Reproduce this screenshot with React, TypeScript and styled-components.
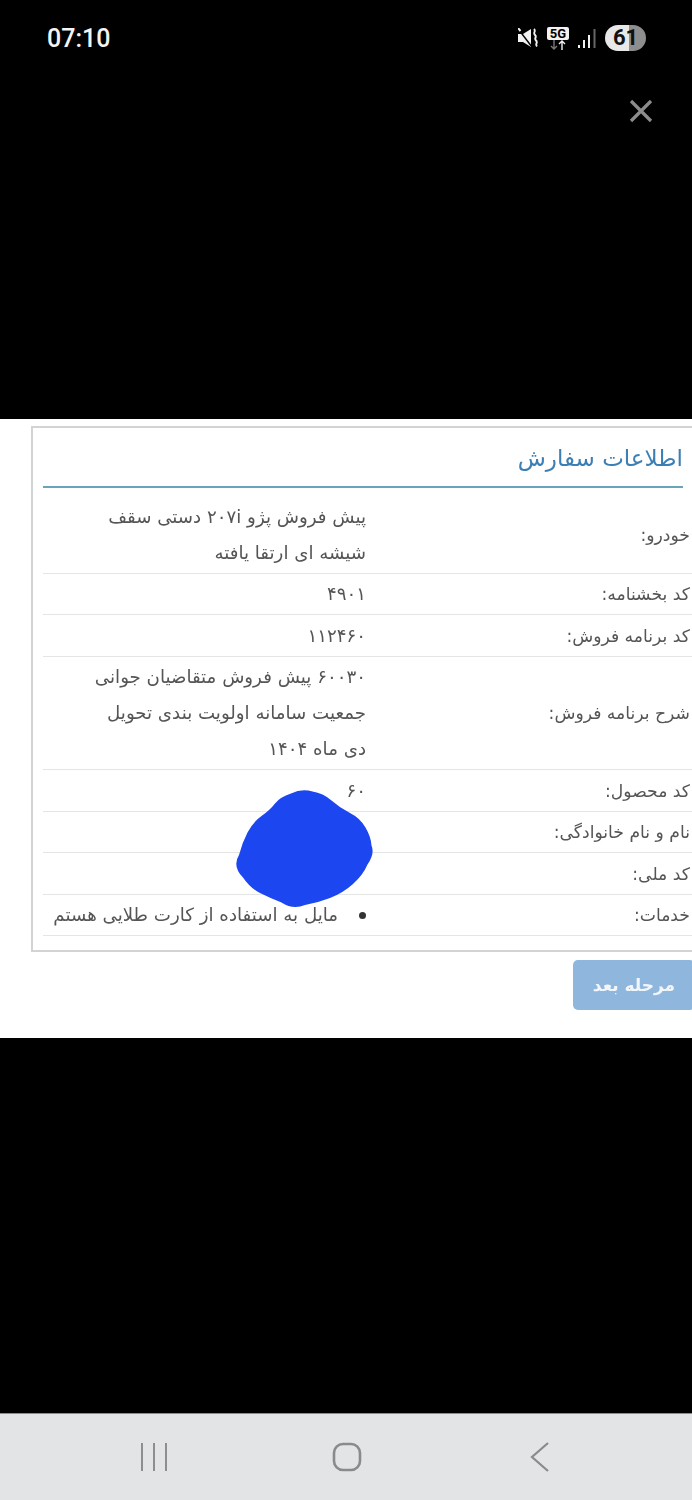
import styled, { createGlobalStyle } from 'styled-components';

const GlobalStyle = createGlobalStyle`
  html, body {
    margin: 0;
    padding: 0;
    background: #000;
  }
  * {
    box-sizing: border-box;
  }
`;

const Screen = styled.div`
  width: 692px;
  height: 1500px;
  position: relative;
  display: flex;
  flex-direction: column;
  overflow: hidden;
  background: #000;
  font-family: 'DejaVu Sans', sans-serif;
`;
const TopArea = styled.div`
  height: 419px;
  flex: none;
  display: flex;
  flex-direction: column;
  padding: 24px 46px 0 47px;
`;
const StatusBar = styled.div`
  height: 28px;
  display: flex;
  align-items: center;
  justify-content: space-between;
`;
const Time = styled.div`
  font-family: Roboto, sans-serif;
  font-weight: 500;
  font-size: 25px;
  color: #f4f4f4;
`;
const StatusIcons = styled.div`
  display: flex;
  align-items: center;
  gap: 9px;
`;
const NetBadge = styled.div`
  width: 22px;
  display: flex;
  flex-direction: column;
  align-items: center;
`;
const NetLabel = styled.div`
  width: 22px;
  height: 13px;
  border-radius: 2px;
  background: #f2f2f2;
  color: #000;
  font-family: Roboto, sans-serif;
  font-weight: 700;
  font-size: 13px;
  line-height: 13px;
  text-align: center;
`;
const Battery = styled.div`
  width: 41px;
  height: 26px;
  border-radius: 13px;
  background: linear-gradient(90deg, #e8e8e8 0 59%, #8e8e8e 59% 100%);
  color: #111;
  font-family: Roboto, sans-serif;
  font-weight: 700;
  font-size: 22px;
  line-height: 26px;
  text-align: center;
`;
const CloseButton = styled.div`
  align-self: flex-end;
  margin: 47px -7px 0 0;
  width: 24px;
  height: 24px;
`;

const Panel = styled.div`
  height: 619px;
  flex: none;
  background: #fff;
  padding: 7px 0 0 31px;
  overflow: hidden;
  filter: blur(0.45px);
`;
const Card = styled.div`
  width: 668px;
  height: 526px;
  border: 2px solid #d2d4d4;
  padding: 0 0 0 10px;
  direction: rtl;
`;
const TitleBar = styled.div`
  height: 60px;
  margin-right: 14px;
  border-bottom: 2px solid #6ba3bd;
  font-size: 23px;
  line-height: 60px;
  color: #3b7fb4;
`;
const Rows = styled.div`
  margin-top: 8px;
`;
const Row = styled.div`
  display: flex;
  align-items: center;
  padding: 2.5px 0 2px;
  border-bottom: 1px solid #e4e6e6;
  color: #555;
  line-height: 36px;
`;
const Label = styled.div`
  width: 331px;
  flex: none;
  padding-right: 7px;
  font-size: 17.2px;
  white-space: nowrap;
`;
const Value = styled.div`
  flex: 1;
  font-size: 18.2px;
  white-space: nowrap;
`;
const ValueLine = styled.div`
  height: 36px;
`;
const Services = styled.ul`
  margin: 0;
  padding: 0;
  list-style: none;
`;
const ServiceItem = styled.li`
  display: flex;
  align-items: center;
  &::before {
    content: '';
    width: 7px;
    height: 7px;
    margin-left: 21px;
    border-radius: 50%;
    background: #333;
  }
`;
const ButtonRow = styled.div`
  width: 668px;
  display: flex;
  justify-content: flex-end;
  padding-right: 4px;
  margin-top: 8px;
`;
const NextButton = styled.div`
  width: 122px;
  height: 50px;
  border-radius: 5px;
  background: #8fb6dc;
  color: #f2f6fa;
  font-size: 17px;
  font-weight: 700;
  line-height: 50px;
  text-align: center;
  direction: rtl;
`;
const Scribble = styled.svg`
  position: absolute;
  left: 0;
  top: 0;
  pointer-events: none;
`;
const Spacer = styled.div`
  flex: 1;
`;
const NavBar = styled.div`
  height: 87px;
  flex: none;
  border-top: 1px solid #8c8c8e;
  background: #e3e4e6;
  padding-left: 2px;
  display: grid;
  grid-template-columns: repeat(3, 193px);
  justify-content: center;
  align-items: center;
  justify-items: center;
`;

const rows = [
  { label: 'خودرو:', lines: ['پیش فروش پژو ۲۰۷i دستی سقف', 'شیشه ای ارتقا یافته'] },
  { label: 'کد بخشنامه:', lines: ['۴۹۰۱'] },
  { label: 'کد برنامه فروش:', lines: ['۱۱۲۴۶۰'] },
  {
    label: 'شرح برنامه فروش:',
    lines: ['۶۰۰۳۰ پیش فروش متقاضیان جوانی', 'جمعیت سامانه اولویت بندی تحویل', 'دی ماه ۱۴۰۴'],
  },
  { label: 'کد محصول:', lines: ['۶۰'] },
  { label: 'نام و نام خانوادگی:', lines: [''] },
  { label: 'کد ملی:', lines: [''] },
];

const App = () => {
  return (
    <Screen>
      <GlobalStyle />
      <TopArea>
        <StatusBar>
          <Time>07:10</Time>
          <StatusIcons>
            <svg width="20" height="20" viewBox="0 0 20 20">
              <path d="M0 6h5l8-5v18l-8-5H0z" fill="#f2f2f2" />
              <path d="M1 2l13 17" stroke="#000" strokeWidth="1.4" />
              <path d="M0 0l2.5 3" stroke="#f2f2f2" strokeWidth="2" />
              <path
                d="M16 1c2.5 2.5-1.5 3.5 1 6s-1.5 3 1 5.5-1.5 3 1 6"
                fill="none"
                stroke="#f2f2f2"
                strokeWidth="1.9"
              />
            </svg>
            <NetBadge>
              <NetLabel>5G</NetLabel>
              <svg width="22" height="10" viewBox="0 0 22 10">
                <path d="M7 0v9M4 6l3 3 3-3" fill="none" stroke="#777" strokeWidth="1.4" />
                <path d="M15 10V1M12 4l3-3 3 3" fill="none" stroke="#f2f2f2" strokeWidth="1.4" />
              </svg>
            </NetBadge>
            <svg width="18" height="19" viewBox="0 0 18 19">
              <rect x="0" y="16" width="2" height="3" fill="#f2f2f2" />
              <rect x="5" y="11" width="2" height="8" fill="#f2f2f2" />
              <rect x="10" y="6" width="2" height="13" fill="#f2f2f2" />
              <rect x="15.5" y="0" width="2" height="19" fill="#666" />
            </svg>
            <Battery>61</Battery>
          </StatusIcons>
        </StatusBar>
        <CloseButton>
          <svg width="24" height="24" viewBox="0 0 24 24">
            <path d="M2 2l20 20M22 2L2 22" stroke="#8c8c8c" strokeWidth="3.2" />
          </svg>
        </CloseButton>
      </TopArea>
      <Panel>
        <Card>
          <TitleBar>اطلاعات سفارش</TitleBar>
          <Rows>
            {rows.map((row) => (
              <Row key={row.label}>
                <Label>{row.label}</Label>
                <Value>
                  {row.lines.map((line, i) => (
                    <ValueLine key={i}>{line}</ValueLine>
                  ))}
                </Value>
              </Row>
            ))}
            <Row>
              <Label>خدمات:</Label>
              <Value>
                <Services>
                  <ServiceItem>مایل به استفاده از کارت طلایی هستم</ServiceItem>
                </Services>
              </Value>
            </Row>
          </Rows>
        </Card>
        <ButtonRow>
          <NextButton>مرحله بعد</NextButton>
        </ButtonRow>
      </Panel>
      <Spacer />
      <NavBar>
        <svg width="28" height="28" viewBox="0 0 28 28">
          <path d="M2 0v28M14 0v28M26 0v28" stroke="#8a8a8c" strokeWidth="1.9" />
        </svg>
        <svg width="30" height="30" viewBox="0 0 30 30">
          <rect x="2" y="2" width="26" height="26" rx="9" fill="none" stroke="#8a8a8c" strokeWidth="2.6" />
        </svg>
        <svg width="20" height="30" viewBox="0 0 20 30">
          <path d="M18 1L2 15l16 14" fill="none" stroke="#8a8a8c" strokeWidth="2.2" />
        </svg>
      </NavBar>
      <Scribble width="692" height="1500" viewBox="0 0 692 1500">
        <path
          d="M291 793.5Q302 788 312.5 791.5Q323 793 331.5 800.5Q340 808 350 813Q360 818 365.5 827.5Q371 837 371.5 845.5Q375 854 367.5 864.5Q363 875 353 884Q343 893 330 898Q317 903 305 905Q293 910 281.5 902.5Q270 898 260 893Q250 888 243 877.5Q232 866 239 855Q242 843 247.5 832.5Q253 822 261.5 816Q270 810 275 803.5Q280 797 291 793.5Z"
          fill="#1c46ef"
        />
      </Scribble>
    </Screen>
  );
};

export default App;
